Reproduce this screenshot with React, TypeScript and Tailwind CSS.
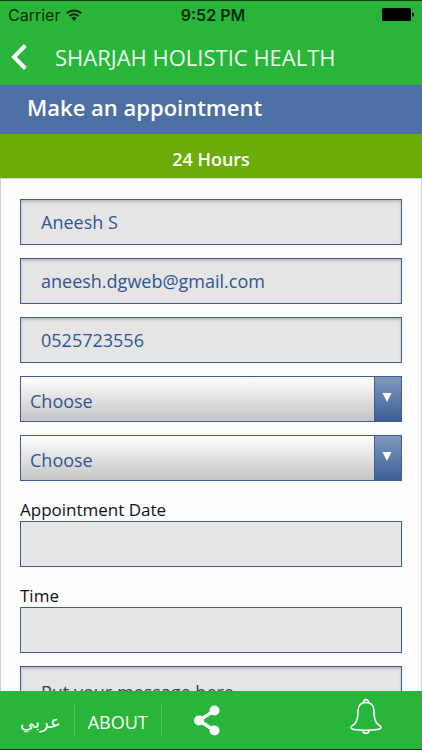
import { ReactNode, useState } from "react";

const fieldStyle =
    "block h-[46px] w-full rounded-none border border-[#3c5e96] bg-[#e5e5e5] px-5 text-lg text-[#2f5690] outline-none";

const insetShadow = "shadow-[inset_0_2px_3px_rgba(0,0,0,0.18)]";

type fieldProps = {
    id: string;
    label: string;
}

type textFieldProps = fieldProps & {
    type: string;
    initial: string;
}

/* Text field without a visible label */
function TextField( props: textFieldProps ) {
    const [value, setValue] = useState( props.initial );

    return (
        <input
            id={props.id}
            type={props.type}
            aria-label={props.label}
            value={value}
            onChange={(e) => setValue( e.target.value )}
            className={`${fieldStyle} ${insetShadow}`}
        />
    );
}

/* Drop-down with the blue arrow box on the right */
function SelectField( props: fieldProps ) {
    return (
        <div className="relative">
            <select
                id={props.id}
                aria-label={props.label}
                className="block h-[46px] w-full appearance-none rounded-none border border-[#3c5e96] bg-linear-to-b from-white to-[#c4c4c4] pt-[3px] pr-9 pl-[9px] text-lg text-[#2f5690] outline-none"
            >
                <option>Choose</option>
            </select>
            <span className="pointer-events-none absolute inset-y-0 right-0 flex w-7 justify-center border border-[#3c5e96] bg-linear-to-b from-[#8299bd] to-[#3c5f97] pt-4 pr-[2px]">
                <svg width="10" height="9" viewBox="0 0 10 9" fill="white" aria-hidden="true">
                    <path d="M0.5 0h9L5 9z" />
                </svg>
            </span>
        </div>
    );
}

/* Field with its label above */
function LabeledField( props: fieldProps ) {
    return (
        <div>
            <label htmlFor={props.id} className="block h-[27px] pt-1 text-[17px] leading-6 text-[#111111]">{props.label}</label>
            <input id={props.id} type="text" className={fieldStyle} />
        </div>
    );
}

function StatusBar() {
    return (
        <div className="grid h-7 grid-cols-3 items-center border-t border-[#123d18] px-2 font-['Inter','Liberation_Sans',sans-serif] text-base leading-5 text-[#062c0b]">
            <div className="flex items-center gap-1.5">
                <span>Carrier</span>
                <svg width="16" height="12" viewBox="0 0 16 12" fill="none" stroke="currentColor" strokeWidth="2" aria-hidden="true">
                    <path d="M0.8 4.4a10.2 10.2 0 0 1 14.4 0" />
                    <path d="M3.4 7.1a6.5 6.5 0 0 1 9.2 0" />
                    <path d="M8 12L5.3 9.2a3.8 3.8 0 0 1 5.4 0z" fill="currentColor" stroke="none" />
                </svg>
            </div>
            <span className="whitespace-nowrap pl-1 text-center font-semibold">9:52 PM</span>
            <svg className="justify-self-end" width="32" height="13" viewBox="0 0 32 13" fill="black" aria-hidden="true">
                <rect x="0" y="0" width="29" height="13" rx="1.5" />
                <path d="M30 4.3q2 0.4 2 2.2t-2 2.2z" />
            </svg>
        </div>
    );
}

function FooterDivider( props: { children: ReactNode } ) {
    return <div className="flex h-8 items-center border-r border-[#43ca55]">{props.children}</div>;
}

export default function App() {
    return (
        <div className="flex h-screen flex-col bg-[#fdfdfd] font-['Open_Sans','Noto_Sans',sans-serif]">
            <header className="shrink-0 bg-[#28b53a]">
                <StatusBar />
                <div className="flex h-[57px] items-center gap-7 px-[11px] text-white">
                    <button type="button" aria-label="Back" className="cursor-pointer">
                        <svg width="16" height="26" viewBox="0 0 16 26" fill="none" stroke="currentColor" strokeWidth="4" aria-hidden="true">
                            <path d="M14.3 1.5L3 13l11.3 11.5" />
                        </svg>
                    </button>
                    <h1 className="whitespace-nowrap text-[22px] leading-7 font-normal text-[#eafbec]">SHARJAH HOLISTIC HEALTH</h1>
                </div>
            </header>

            <h2 className="h-[49px] shrink-0 bg-[#4c70a3] px-[27px] pt-2 text-[22px] leading-7 font-semibold text-white">Make an appointment</h2>
            <p className="h-11 shrink-0 bg-[#6aac08] pt-[13px] text-center text-lg leading-6 font-semibold text-white">24 Hours</p>

            <main className="min-h-0 flex-1 overflow-hidden border-x border-t border-[#cfcfcf]">
                <form className="flex flex-col gap-[13px] px-[19px] pt-5">
                    <TextField id="name" type="text" label="Name" initial="Aneesh S" />
                    <TextField id="email" type="email" label="Email" initial="aneesh.dgweb@gmail.com" />
                    <TextField id="phone" type="tel" label="Phone" initial="0525723556" />
                    <SelectField id="department" label="Department" />
                    <SelectField id="doctor" label="Doctor" />
                    <LabeledField id="date" label="Appointment Date" />
                    <LabeledField id="time" label="Time" />
                    <textarea
                        aria-label="Message"
                        placeholder="Put your message here"
                        className={`block h-28 w-full resize-none border border-[#3c5e96] bg-[#e5e5e5] px-5 py-[13px] text-lg leading-6 outline-none placeholder:text-[#3f3f3f] ${insetShadow}`}
                    />
                </form>
            </main>

            <footer className="flex h-[59px] shrink-0 items-center border-b border-[#0b3a12] bg-[#28b53a] text-white">
                <FooterDivider>
                    <a href="#arabic" lang="ar" dir="rtl" className="pt-1 pr-[13px] pl-5 font-['DejaVu_Sans',sans-serif] text-lg leading-6">عربي</a>
                </FooterDivider>
                <FooterDivider>
                    <a href="#about" className="px-[13px] pt-1 text-lg leading-6">ABOUT</a>
                </FooterDivider>
                <button type="button" aria-label="Share" className="ml-8 cursor-pointer">
                    <svg width="26" height="31" viewBox="0 0 26 31" fill="currentColor" aria-hidden="true">
                        <path d="M20.5 5.5L5 15.5l15.5 10" fill="none" stroke="currentColor" strokeWidth="3.4" />
                        <circle cx="5" cy="15.5" r="5" />
                        <circle cx="20.5" cy="5.5" r="5" />
                        <circle cx="20.5" cy="25.5" r="5" />
                    </svg>
                </button>
                <button type="button" aria-label="Notifications" className="mr-10 mb-2 ml-auto cursor-pointer">
                    <svg width="32" height="36" viewBox="0 0 32 36" fill="none" stroke="currentColor" strokeWidth="1.6" strokeLinejoin="round" aria-hidden="true">
                        <path d="M16 4.5c-5 0-7.6 2.6-7.9 7.5-0.3 6 0.2 9.5-3 13.2-1.8 2-4.2 2.6-4.2 4.4 0 1.9 6.6 2.7 15.1 2.7s15.1-0.8 15.1-2.7c0-1.8-2.4-2.4-4.2-4.4-3.2-3.700-2.700-7.200-3-13.200-0.300-4.900-2.900-7.500-7.900-7.500z" />
                        <path d="M13.7 4.7a2.4 2.4 0 1 1 4.6 0" />
                        <path d="M13 32.4a3 2.8 0 0 0 6 0" />
                    </svg>
                </button>
            </footer>
        </div>
    );
}
